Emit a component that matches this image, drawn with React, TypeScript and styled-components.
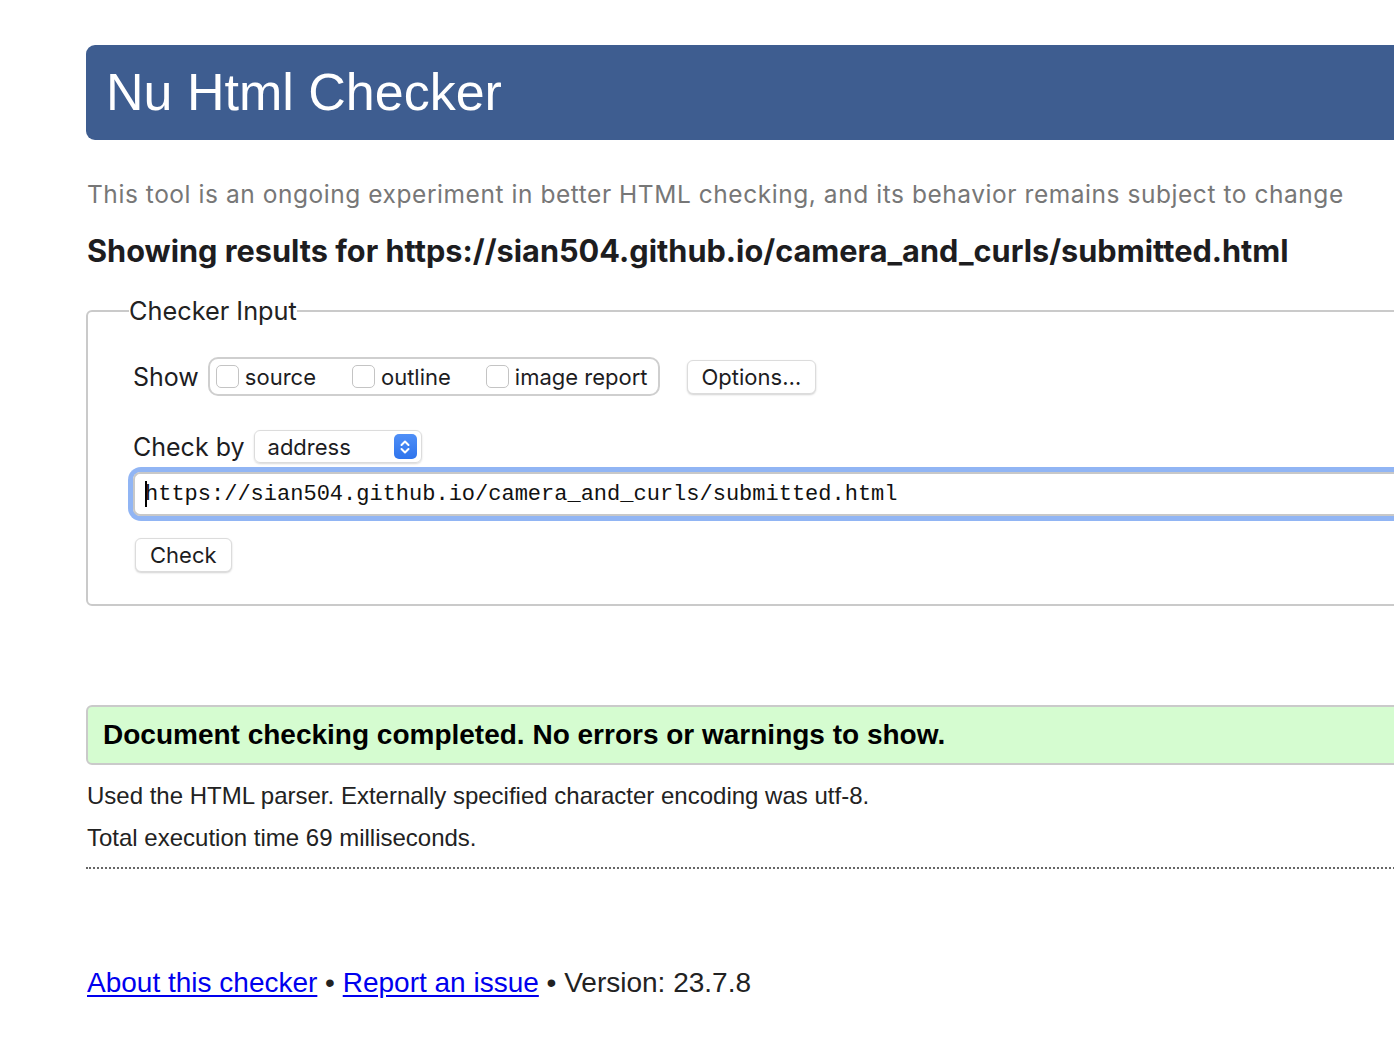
import React from "react";
import styled, { createGlobalStyle } from "styled-components";

const Global = createGlobalStyle`
  html, body { margin: 0; padding: 0; background: #fff; overflow: hidden; }
  body { font-family: "Liberation Sans", Arial, sans-serif; color: #222; }
`;

const Page = styled.div`
  width: 1500px;
  padding: 45px 0 0 86px;
`;

const Header = styled.h1`
  margin: 0;
  height: 95px;
  background: #3e5d90;
  border-radius: 9px 0 0 9px;
  color: #fff;
  font-family: "Liberation Sans", Arial, sans-serif;
  font-weight: 400;
  font-size: 52px;
  line-height: 95px;
  padding-left: 20px;
`;

const Intro = styled.p`
  margin: 39px 0 0 1px;
  color: #777;
  font-family: Inter, "Liberation Sans", sans-serif;
  font-size: 24.5px;
  letter-spacing: 0.55px;
  line-height: 30px;
`;

const Results = styled.h2`
  margin: 23px 0 0 1px;
  font-family: Inter, "Liberation Sans", sans-serif;
  font-size: 30.7px;
  line-height: 38px;
  font-weight: 700;
  color: #1d1d1f;
`;

const Fieldset = styled.fieldset`
  margin: 25px 0 0 0;
  border: 2px solid #cacaca;
  border-radius: 6px;
  padding: 0 0 32px 45px;
  font-family: Inter, "Liberation Sans", sans-serif;
`;

const Legend = styled.legend`
  padding: 0;
  font-size: 25.3px;
  color: #222;
  margin-left: -4px;
`;

const Row = styled.div<{ $top: number }>`
  display: flex;
  align-items: center;
  margin-top: ${(p) => p.$top}px;
`;

const Label = styled.span`
  font-size: 25px;
  color: #1d1d1f;
  margin-right: 9px;
`;

const Group = styled.div`
  display: flex;
  align-items: center;
  height: 39px;
  box-sizing: border-box;
  border: 2px solid #cfcfcf;
  border-radius: 10px;
  padding: 0 10px 0 6px;
`;

const CheckItem = styled.label<{ $gap: number }>`
  display: flex;
  align-items: center;
  margin-right: ${(p) => p.$gap}px;
  font-size: 22px;
  color: #1d1d1f;
  &:last-child { margin-right: 0; }
`;

const Box = styled.span`
  width: 23px;
  height: 23px;
  box-sizing: border-box;
  border: 1.5px solid #c4c4c4;
  border-radius: 5px;
  background: #fff;
  margin-right: 6px;
`;

const Button = styled.button<{ $left: number }>`
  font-family: Inter, "Liberation Sans", sans-serif;
  font-size: 22px;
  color: #1d1d1f;
  background: #fff;
  border: 1px solid #dcdcdc;
  border-radius: 6px;
  box-shadow: 0 1px 2px rgba(0, 0, 0, 0.18);
  height: 34px;
  padding: 0 14px;
  line-height: 32px;
  margin-left: ${(p) => p.$left}px;
`;

const Select = styled.div`
  display: flex;
  align-items: center;
  justify-content: space-between;
  width: 168px;
  height: 33px;
  box-sizing: border-box;
  border: 1px solid #dcdcdc;
  border-radius: 6px;
  box-shadow: 0 1px 2px rgba(0, 0, 0, 0.15);
  padding: 0 4px 0 13px;
  font-size: 22px;
  color: #1d1d1f;
`;

const Stepper = styled.span`
  width: 23px;
  height: 25px;
  border-radius: 5px;
  background: linear-gradient(#4f8ff7, #2f74ec);
  display: flex;
  align-items: center;
  justify-content: center;
`;

const InputRing = styled.div`
  margin: 4px 0 0 -5px;
  border: 5px solid #91b5f4;
  border-radius: 13px 0 0 13px;
  border-right: none;
`;

const Input = styled.div`
  height: 44px;
  box-sizing: border-box;
  border: 2px solid #c8c8c8;
  border-right: none;
  border-radius: 7px 0 0 7px;
  display: flex;
  align-items: center;
  padding-left: 10px;
  font-family: "Liberation Mono", "DejaVu Sans Mono", monospace;
  font-size: 22px;
  color: #111;
`;

const Caret = styled.span`
  display: inline-block;
  width: 2px;
  height: 26px;
  background: #000;
  margin-right: -2px;
`;

const Success = styled.p`
  margin: 99px 0 0 0;
  height: 60px;
  box-sizing: border-box;
  background: #d5fcd0;
  border: 2px solid #cacaca;
  border-radius: 6px;
  padding-left: 15px;
  font-weight: 700;
  font-size: 28px;
  line-height: 56px;
  color: #000;
`;

const Info = styled.p<{ $top: number }>`
  margin: ${(p) => p.$top}px 0 0 1px;
  font-size: 24px;
  line-height: 30px;
  color: #222;
`;

const Dotted = styled.hr`
  margin: 14px 0 0 0;
  border: none;
  border-top: 2px dotted #666;
  height: 0;
`;

const Footer = styled.p`
  margin: 97px 0 0 1px;
  font-size: 28px;
  line-height: 34px;
  color: #222;
`;

const Link = styled.a`
  color: #0000ee;
  text-decoration: underline;
  text-underline-offset: 3px;
`;

export default function App() {
  return (
    <>
      <Global />
      <Page>
        <Header>Nu Html Checker</Header>
        <Intro>
          This tool is an ongoing experiment in better HTML checking, and its
          behavior remains subject to change
        </Intro>
        <Results>
          Showing results for https://sian504.github.io/camera_and_curls/submitted.html
        </Results>
        <Fieldset>
          <Legend>Checker Input</Legend>
          <Row $top={31}>
            <Label>Show</Label>
            <Group>
              <CheckItem $gap={36}>
                <Box />
                source
              </CheckItem>
              <CheckItem $gap={35}>
                <Box />
                outline
              </CheckItem>
              <CheckItem $gap={0}>
                <Box />
                image report
              </CheckItem>
            </Group>
            <Button $left={27}>Options…</Button>
          </Row>
          <Row $top={34}>
            <Label>Check by</Label>
            <Select>
              address
              <Stepper>
                <svg width="12" height="18" viewBox="0 0 12 18" fill="none">
                  <path d="M2.5 7 6 3.5 9.5 7M2.5 11 6 14.5 9.5 11" stroke="#fff" strokeWidth="2" strokeLinecap="round" strokeLinejoin="round" />
                </svg>
              </Stepper>
            </Select>
          </Row>
          <InputRing>
            <Input>
              <Caret />
              https://sian504.github.io/camera_and_curls/submitted.html
            </Input>
          </InputRing>
          <Row $top={17}>
            <Button $left={2}>Check</Button>
          </Row>
        </Fieldset>
        <Success>Document checking completed. No errors or warnings to show.</Success>
        <Info $top={16}>Used the HTML parser. Externally specified character encoding was utf-8.</Info>
        <Info $top={12}>Total execution time 69 milliseconds.</Info>
        <Dotted />
        <Footer>
          <Link href="#">About this checker</Link> • <Link href="#">Report an issue</Link> • Version: 23.7.8
        </Footer>
      </Page>
    </>
  );
}
